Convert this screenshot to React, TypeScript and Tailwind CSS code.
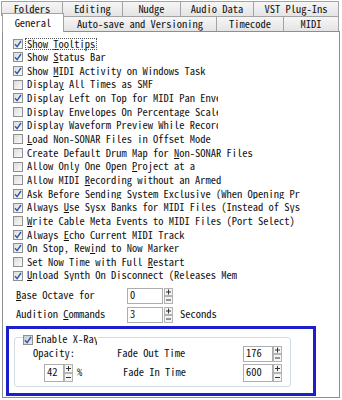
import React from "react";

const FONT = '"Noto Sans Mono CJK SC", "Liberation Mono", monospace';

function CB({ checked, dim }: { checked?: boolean; dim?: boolean }) {
  return (
    <span
      className={`w-[10px] h-[10px] border border-[#8f8f8f] bg-gradient-to-br ${
        dim ? "from-[#c8ccd4] to-[#e8ebef]" : "from-[#dcdcdc] to-[#fafafa]"
      } flex items-center justify-center shrink-0`}
    >
      {checked && (
        <svg width="8" height="8" viewBox="0 0 8 8">
          <path d="M1 4.3 L3.1 6.6 L7 1" stroke="#2b58ad" strokeWidth="1.4" fill="none" />
        </svg>
      )}
    </span>
  );
}

function Spin({ h = 16 }: { h?: number }) {
  const half = h / 2;
  return (
    <svg width="9" height={h} viewBox={`0 0 9 ${h}`} className="shrink-0">
      <rect x="0.5" y="0.5" width="8" height={half - 1} fill="#f4f4f4" stroke="#b3b3b3" />
      <rect x="0.5" y={half + 0.5} width="8" height={half - 1} fill="#f4f4f4" stroke="#b3b3b3" />
      <path d={`M2 ${half / 2} H7 M4.5 ${half / 2 - 2.5} V${half / 2 + 2.5}`} stroke="#333" strokeWidth="1" />
      <path d={`M2 ${half + half / 2} H7`} stroke="#333" strokeWidth="1" />
    </svg>
  );
}

function Input({ w, h, v }: { w: string; h: string; v: string }) {
  return (
    <div className={`${w} ${h} border border-[#abadb3] bg-white flex items-center pl-[2px] shrink-0`}>{v}</div>
  );
}

type Row = { c: boolean; pre: string; u?: string; post?: string; w?: string; focus?: boolean };

const rows: Row[] = [
  { c: true, pre: "Show ", u: "T", post: "ooltips", focus: true },
  { c: true, pre: "Show ", u: "S", post: "tatus Bar" },
  { c: true, pre: "Show ", u: "M", post: "IDI Activity on Windows Task" },
  { c: false, pre: "Displa", u: "y", post: " All Times as SMF" },
  { c: true, pre: "Display Left on Top for MIDI Pan Envelopes", w: "w-[192px]" },
  { c: false, pre: "Display En", u: "v", post: "elopes On Percentage Scale", w: "w-[192px]" },
  { c: true, pre: "Display Waveform Preview While Recording", w: "w-[192px]" },
  { c: false, pre: "", u: "L", post: "oad Non-SONAR Files in Offset Mode" },
  { c: false, pre: "Create Default Drum Map for ", u: "N", post: "on-SONAR Files" },
  { c: false, pre: "Allow Only One Open ", u: "P", post: "roject at a" },
  { c: false, pre: "Allow MIDI ", u: "R", post: "ecording without an Armed" },
  { c: true, pre: "As", u: "k", post: " Before Sending System Exclusive (When Opening Projects)", w: "w-[274px]" },
  { c: true, pre: "Always ", u: "U", post: "se Sysx Banks for MIDI Files (Instead of Sysx Banks)", w: "w-[274px]" },
  { c: false, pre: "", u: "W", post: "rite Cable Meta Events to MIDI Files (Port Select)" },
  { c: true, pre: "Always ", u: "E", post: "cho Current MIDI Track" },
  { c: true, pre: "On Stop, Rew", u: "i", post: "nd to Now Marker" },
  { c: false, pre: "Set Now Time with Full ", u: "R", post: "estart" },
  { c: true, pre: "", u: "U", post: "nload Synth On Disconnect (Releases Memory)", w: "w-[211px]" },
];

function Tab({ w, label, sel }: { w: string; label: string; sel?: boolean }) {
  return (
    <div
      className={`${w} border border-[#a3a3a3] border-b-0 flex items-center justify-center shrink-0 -ml-px ${
        sel ? "bg-white h-[19px] -mt-[3px] relative z-10" : "h-full bg-gradient-to-b from-[#f6f6f6] to-[#e4e4e4]"
      }`}
    >
      {label}
    </div>
  );
}

export default function App() {
  return (
    <div
      className="w-[342px] h-[400px] bg-white text-[#111] text-[10.5px] font-light leading-none overflow-hidden"
      style={{ fontFamily: FONT }}
    >
      <div className="flex h-[15px] mt-[1px] ml-[2px]">
        <Tab w="w-[62px]" label="Folders" />
        <Tab w="w-[61px]" label="Editing" />
        <Tab w="w-[59px]" label="Nudge" />
        <Tab w="w-[74px]" label="Audio Data" />
        <Tab w="w-[86px]" label="VST Plug-Ins" />
      </div>
      <div className="flex h-[15px] ml-[3px] items-start">
        <Tab w="w-[62px]" label="General" sel />
        <Tab w="w-[154px]" label="Auto-save and Versioning" />
        <Tab w="w-[68px]" label="Timecode" />
        <Tab w="w-[56px]" label="MIDI" />
      </div>
      <div className="ml-[2px] w-[338px] h-[367px] border border-[#8c8e94] bg-white">
        <div className="pl-[10px] pt-[5px] flex flex-col">
          {rows.map((r, i) => (
            <div key={i} className="flex items-center h-[13.65px]">
              <CB checked={r.c} />
              <span
                className={`ml-[3px] px-[1px] whitespace-nowrap flex items-center ${
                  r.w ? `${r.w} overflow-hidden` : ""
                } ${r.focus ? "outline outline-1 outline-dotted outline-[#555]" : ""}`}
              >
                <span>
                  {r.pre}
                  {r.u && <u className="underline-offset-[1px]">{r.u}</u>}
                  {r.post}
                </span>
              </span>
            </div>
          ))}
        </div>
        <div className="pl-[13px] mt-[5px] flex items-center h-[16px]">
          <span className="w-[111px]">
            <u>B</u>ase Octave for
          </span>
          <Input w="w-[36px]" h="h-[16px]" v="0" />
          <span className="ml-[1px]">
            <Spin h={16} />
          </span>
        </div>
        <div className="pl-[13px] mt-[3px] flex items-center h-[16px]">
          <span className="w-[111px]">
            Audition <u>C</u>ommands
          </span>
          <Input w="w-[36px]" h="h-[16px]" v="3" />
          <span className="ml-[1px]">
            <Spin h={16} />
          </span>
          <span className="ml-[7px]">Seconds</span>
        </div>
        <div className="ml-[3px] mt-[3px] w-[310px] h-[70px] border-[3px] border-[#1c1fc9]">
          <div className="ml-[5px] mt-[8px] w-[277px] h-[50px] border border-[#d3dce3] rounded-[3px] relative">
            <div className="absolute left-[8px] -top-[3px] h-[10px] flex items-center bg-white pr-[1px]">
              <CB checked dim />
              <span className="ml-[3px] w-[61px] overflow-hidden whitespace-nowrap">Enable X-Ray</span>
            </div>
            <div className="mt-[8px] flex items-center h-[16px] pl-[18px]">
              <span className="w-[84px]">Opacity:</span>
              <span className="w-[126px]">Fade Out Time</span>
              <Input w="w-[30px]" h="h-[16px]" v="176" />
              <Spin h={16} />
            </div>
            <div className="mt-[2px] flex items-center h-[18px] pl-[29px]">
              <Input w="w-[20px]" h="h-[18px]" v="42" />
              <Spin h={18} />
              <span className="ml-[4px] w-[46px]">%</span>
              <span className="w-[120px]">Fade In Time</span>
              <Input w="w-[30px]" h="h-[18px]" v="600" />
              <Spin h={18} />
            </div>
          </div>
        </div>
      </div>
    </div>
  );
}
